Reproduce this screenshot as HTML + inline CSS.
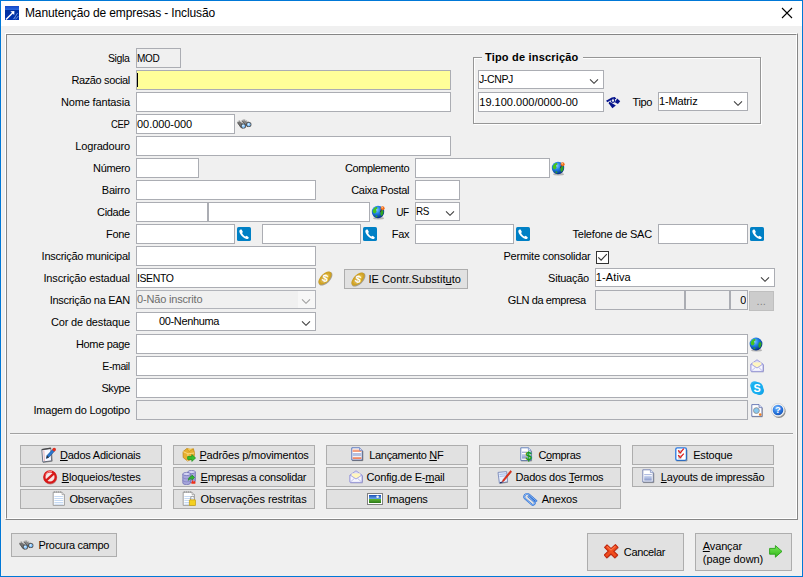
<!DOCTYPE html>
<html lang="pt-BR"><head><meta charset="utf-8"><title>Manutenção de empresas - Inclusão</title>
<style>
html,body{margin:0;padding:0;background:#f0f0f0;}
body{width:803px;height:577px;overflow:hidden;font-family:"Liberation Sans",sans-serif;font-size:11px;}
#win{position:relative;width:803px;height:577px;background:#f0f0f0;overflow:hidden;}
#win div,#win span,#win svg{position:absolute;box-sizing:border-box;}
.t{white-space:nowrap;line-height:13px;font-family:"Liberation Sans",sans-serif;}
.t u{position:static;text-decoration:underline;text-underline-offset:1px;}
.e{height:20px;border:1px solid #abadb3;background:#fff;}
.c{height:19px;border:1px solid #abadb3;background:#fff;}
.d{background:#f0f0f0;}
.b{height:20px;border:1px solid #adadad;background:#e1e1e1;}
.ar{width:10px;height:6px;}
</style></head><body>
<div id="win">
<div style="left:0;top:0;width:803px;height:577px;border:1px solid #0078d7;"></div>
<div style="left:1px;top:1px;width:801px;height:25px;background:#fff;"></div>
<div style="left:1px;top:26px;width:1px;height:550px;background:#f7f2ee;"></div>
<div style="left:801px;top:26px;width:1px;height:550px;background:#f7f2ee;"></div>
<svg style="left:781px;top:7px;width:12px;height:12px" viewBox="0 0 12 12"><path d="M1 1 L11 11 M11 1 L1 11" stroke="#000" stroke-width="1.1" fill="none"/></svg>
<div style="left:5px;top:33px;width:793px;height:487px;border-left:1px solid #fff;border-top:1px solid #fff;border-right:1px solid #868686;border-bottom:1px solid #868686;"></div>
<div style="left:6px;top:34px;width:791px;height:485px;border-left:1px solid #868686;border-top:1px solid #868686;border-right:1px solid #fff;border-bottom:1px solid #fff;"></div>
<div style="left:474px;top:58px;width:288px;height:67px;border:1px solid #fff;"></div>
<div style="left:473px;top:57px;width:288px;height:67px;border:1px solid #969696;"></div>
<div style="left:482px;top:52px;width:101px;height:12px;background:#f0f0f0;"></div>
<div style="left:10px;top:433px;width:783px;height:1px;background:#a2a2a2;"></div>
<div style="left:10px;top:434px;width:783px;height:1px;background:#f8f8f8;"></div>
<div class="e d" style="left:136px;top:48px;width:45px;"></div>
<div class="e" style="left:136px;top:70px;width:315px;background:#ffff99;"></div>
<div style="left:137px;top:73px;width:1px;height:14px;background:#000;"></div>
<div class="e" style="left:136px;top:92px;width:315px;"></div>
<div class="e" style="left:136px;top:114px;width:99px;"></div>
<div class="e" style="left:136px;top:136px;width:315px;"></div>
<div class="e" style="left:136px;top:158px;width:63px;"></div>
<div class="e" style="left:136px;top:180px;width:180px;"></div>
<div class="e" style="left:136px;top:202px;width:72px;"></div>
<div class="e" style="left:208px;top:202px;width:162px;"></div>
<div class="e" style="left:136px;top:224px;width:99px;"></div>
<div class="e" style="left:262px;top:224px;width:99px;"></div>
<div class="e" style="left:136px;top:246px;width:180px;"></div>
<div class="e" style="left:136px;top:268px;width:180px;"></div>
<div class="c" style="left:136px;top:290px;width:180px;background:#f0f0f0;border-color:#b2b4ba;"></div>
<div style="left:298px;top:291px;width:17px;height:17px;background:#f7f7f7;"></div>
<svg class="ar" style="left:301px;top:298px" viewBox="0 0 10 6"><path d="M1 1.3 L5 5.3 L9 1.3" fill="none" stroke="#a0a0a0" stroke-width="1.1"/></svg>
<div class="c" style="left:136px;top:312px;width:180px;"></div>
<svg class="ar" style="left:301px;top:320px" viewBox="0 0 10 6"><path d="M1 1.3 L5 5.3 L9 1.3" fill="none" stroke="#404040" stroke-width="1.1"/></svg>
<div class="e" style="left:136px;top:334px;width:612px;"></div>
<div class="e" style="left:136px;top:356px;width:612px;"></div>
<div class="e" style="left:136px;top:378px;width:612px;"></div>
<div class="e d" style="left:136px;top:400px;width:612px;"></div>
<div class="e" style="left:415px;top:158px;width:135px;"></div>
<div class="e" style="left:415px;top:180px;width:45px;"></div>
<div class="c" style="left:415px;top:202px;width:45px;"></div>
<svg class="ar" style="left:445px;top:210px" viewBox="0 0 10 6"><path d="M1 1.3 L5 5.3 L9 1.3" fill="none" stroke="#404040" stroke-width="1.1"/></svg>
<div class="e" style="left:415px;top:224px;width:99px;"></div>
<div class="e" style="left:658px;top:224px;width:90px;"></div>
<div class="c" style="left:595px;top:268px;width:180px;"></div>
<svg class="ar" style="left:760px;top:276px" viewBox="0 0 10 6"><path d="M1 1.3 L5 5.3 L9 1.3" fill="none" stroke="#404040" stroke-width="1.1"/></svg>
<div class="e d" style="left:595px;top:290px;width:90px;"></div>
<div class="e d" style="left:685px;top:290px;width:45px;"></div>
<div class="e d" style="left:730px;top:290px;width:18px;"></div>
<div style="left:749px;top:291px;width:25px;height:20px;background:#cccccc;border:1px solid #bfbfbf;"></div>
<div style="left:596px;top:251px;width:13px;height:13px;border:1px solid #333;background:#fff;"></div>
<svg style="left:596px;top:251px;width:13px;height:13px" viewBox="0 0 13 13"><path d="M2.3 6.3 L5.1 9.1 L10.8 3.2" fill="none" stroke="#333" stroke-width="1.1"/></svg>
<div class="c" style="left:478px;top:70px;width:126px;"></div>
<svg class="ar" style="left:589px;top:78px" viewBox="0 0 10 6"><path d="M1 1.3 L5 5.3 L9 1.3" fill="none" stroke="#404040" stroke-width="1.1"/></svg>
<div class="e" style="left:478px;top:92px;width:126px;"></div>
<div class="c" style="left:658px;top:92px;width:90px;"></div>
<svg class="ar" style="left:733px;top:100px" viewBox="0 0 10 6"><path d="M1 1.3 L5 5.3 L9 1.3" fill="none" stroke="#404040" stroke-width="1.1"/></svg>
<div class="b" style="left:344px;top:269px;width:124px;"></div>
<div class="b" style="left:20px;top:445px;width:142px;"></div>
<div class="b" style="left:20px;top:467px;width:142px;"></div>
<div class="b" style="left:20px;top:489px;width:142px;"></div>
<div class="b" style="left:173px;top:445px;width:142px;"></div>
<div class="b" style="left:173px;top:467px;width:142px;"></div>
<div class="b" style="left:173px;top:489px;width:142px;"></div>
<div class="b" style="left:326px;top:445px;width:142px;"></div>
<div class="b" style="left:326px;top:467px;width:142px;"></div>
<div class="b" style="left:326px;top:489px;width:142px;"></div>
<div class="b" style="left:479px;top:445px;width:142px;"></div>
<div class="b" style="left:479px;top:467px;width:142px;"></div>
<div class="b" style="left:479px;top:489px;width:142px;"></div>
<div class="b" style="left:632px;top:445px;width:142px;"></div>
<div class="b" style="left:632px;top:467px;width:142px;"></div>
<div class="b" style="left:11px;top:533px;width:106px;height:24px;"></div>
<div class="b" style="left:587px;top:533px;width:97px;height:38px;"></div>
<div class="b" style="left:695px;top:533px;width:97px;height:38px;"></div>
<svg style="width:0;height:0"><defs>
<radialGradient id="gGlobe" cx="38%" cy="32%" r="70%"><stop offset="0" stop-color="#8cc8ff"/><stop offset="0.45" stop-color="#1e80e8"/><stop offset="1" stop-color="#062e80"/></radialGradient>
<radialGradient id="gHelp" cx="40%" cy="30%" r="75%"><stop offset="0" stop-color="#7ab8ff"/><stop offset="0.6" stop-color="#2a78e0"/><stop offset="1" stop-color="#1550b0"/></radialGradient>
<linearGradient id="gTitle" x1="0" y1="0" x2="0" y2="1"><stop offset="0" stop-color="#1448c8"/><stop offset="0.3" stop-color="#2a6ae0"/><stop offset="0.32" stop-color="#0030a0"/><stop offset="1" stop-color="#0034b0"/></linearGradient>
<linearGradient id="gSky" x1="0" y1="0" x2="0" y2="1"><stop offset="0" stop-color="#1a50b8"/><stop offset="0.5" stop-color="#6aa8e8"/><stop offset="0.55" stop-color="#5ab030"/><stop offset="1" stop-color="#2a7818"/></linearGradient>
<linearGradient id="gDoc" x1="0" y1="0" x2="0" y2="1"><stop offset="0" stop-color="#c8d4f0"/><stop offset="1" stop-color="#8898c8"/></linearGradient>
<linearGradient id="gGreen" x1="0" y1="0" x2="0" y2="1"><stop offset="0" stop-color="#7ae858"/><stop offset="1" stop-color="#30b818"/></linearGradient>
</defs></svg>
<svg style="left:5px;top:6px;width:14px;height:14px" viewBox="0 0 14 14"><rect x="0" y="0" width="14" height="14" fill="url(#gTitle)"/><path d="M1 13.4 L8 6.4" stroke="#fff" stroke-width="1.4"/><path d="M5.4 5.2 L9.4 5 L9.2 9 Z" fill="#fff"/><path d="M9 12.6 L12.6 7 M10.4 13.4 L13.4 10 M8.4 13.2 L10 11.4" stroke="#9ab8f0" stroke-width="0.9" opacity="0.8"/></svg>
<svg style="left:237px;top:118.5px;width:15px;height:10px" viewBox="0 0 15 10"><path d="M0.2 3.2 L2.2 1.3 L8.9 5.6 L8.6 8.6 L5.2 9.6 L3.4 8.6 Z" fill="#747474"/><path d="M4.6 1.2 L7.2 0.2 L14.3 4 L14.2 7 L11 8.2 L8.8 6.6 Z" fill="#868686"/><path d="M1.2 2.7 L2.3 1.8 L7.4 5 M5.4 1.3 L7.2 0.7 L12.6 3.7" stroke="#cfcfcf" stroke-width="1" fill="none"/><path d="M0.5 3.7 L3.8 8.2 M4.9 1.8 L9.2 6.4" stroke="#444" stroke-width="0.7" fill="none"/><circle cx="6.3" cy="7" r="2.6" fill="#505050"/><circle cx="6.4" cy="7.1" r="1.8" fill="#86c6ff"/><circle cx="6" cy="6.6" r="0.8" fill="#e4f4ff"/><circle cx="11.7" cy="5.5" r="2.6" fill="#505050"/><circle cx="11.8" cy="5.6" r="1.8" fill="#86c6ff"/><circle cx="11.4" cy="5.1" r="0.8" fill="#e4f4ff"/></svg>
<svg style="left:606px;top:97px;width:15px;height:12px" viewBox="0 0 15 12"><path d="M0 3.8 L5.8 0.4 L8.8 0 L10.4 1.8 L8.8 2.3 L7.2 1.6 L1.4 5.2 Z" fill="#06148c"/><circle cx="6.9" cy="3.6" r="1.8" fill="none" stroke="#06148c" stroke-width="1.1"/><path d="M11.2 1.6 L14.2 4.2 L11.9 7 L8.8 5.2 Z" fill="#06148c"/><path d="M3.2 4.4 L9.8 8.6 L6.4 11.2 L2.8 6.4 Z" fill="#06148c"/></svg>
<svg style="left:550.1px;top:159.8px;width:16px;height:16px" viewBox="0 0 16 16"><ellipse cx="8.6" cy="14.2" rx="5.5" ry="1.2" fill="#000" opacity="0.25"/><circle cx="8" cy="8" r="6.2" fill="url(#gGlobe)"/><path d="M3.2 5.5 Q4.5 3 7 2.8 L7.6 4.2 L6 5.4 L6.6 7.8 L5 9.6 L3.4 9 L2.6 7 Z" fill="#44c41c"/><path d="M10.8 6.6 L12.8 6 L13.6 8 L12.6 11 L11 12 L10.4 9.6 Z" fill="#30a820"/><path d="M5.4 11.6 L7 11.4 L7.4 13 L6 13.2 Z" fill="#30a820"/><circle cx="12.6" cy="4.2" r="2" fill="#f06a18"/><circle cx="12.2" cy="3.7" r="0.8" fill="#ffc890"/><path d="M11.4 5.6 L10.2 8.4" stroke="#403020" stroke-width="0.9"/></svg>
<svg style="left:370.3px;top:203.8px;width:16px;height:16px" viewBox="0 0 16 16"><ellipse cx="8.6" cy="14.2" rx="5.5" ry="1.2" fill="#000" opacity="0.25"/><circle cx="8" cy="8" r="6.2" fill="url(#gGlobe)"/><path d="M3.2 5.5 Q4.5 3 7 2.8 L7.6 4.2 L6 5.4 L6.6 7.8 L5 9.6 L3.4 9 L2.6 7 Z" fill="#44c41c"/><path d="M10.8 6.6 L12.8 6 L13.6 8 L12.6 11 L11 12 L10.4 9.6 Z" fill="#30a820"/><path d="M5.4 11.6 L7 11.4 L7.4 13 L6 13.2 Z" fill="#30a820"/><circle cx="12.6" cy="4.2" r="2" fill="#f06a18"/><circle cx="12.2" cy="3.7" r="0.8" fill="#ffc890"/><path d="M11.4 5.6 L10.2 8.4" stroke="#403020" stroke-width="0.9"/></svg>
<svg style="left:748.4px;top:335.5px;width:16px;height:16px" viewBox="0 0 16 16"><ellipse cx="8.6" cy="14.2" rx="5.5" ry="1.2" fill="#000" opacity="0.25"/><circle cx="8" cy="8" r="6.4" fill="url(#gGlobe)"/><path d="M3.2 5.5 Q4.5 3 7 2.8 L7.6 4.2 L6 5.4 L6.6 7.8 L5 9.6 L3.4 9 L2.6 7 Z" fill="#44c41c"/><path d="M10.8 6.6 L12.8 6 L13.6 8 L12.6 11 L11 12 L10.4 9.6 Z" fill="#30a820"/><path d="M5.4 11.6 L7 11.4 L7.4 13 L6 13.2 Z" fill="#30a820"/></svg>
<svg style="left:237px;top:227px;width:14px;height:14px" viewBox="0 0 14 14"><rect x="0" y="0" width="14" height="14" rx="1.6" fill="#0080c5"/><path d="M3.6 2.6 C2.2 3.2 1.9 4.6 3 6.6 C4.6 9.4 7 11.4 9.6 11.9 C11 12.1 11.9 11.2 11.8 10.4 L9.8 8.8 L8.4 9.6 C7 9 5.6 7.4 5.1 6 L5.9 4.9 L4.6 2.5 Z" fill="#fff"/></svg>
<svg style="left:363px;top:227px;width:14px;height:14px" viewBox="0 0 14 14"><rect x="0" y="0" width="14" height="14" rx="1.6" fill="#0080c5"/><path d="M3.6 2.6 C2.2 3.2 1.9 4.6 3 6.6 C4.6 9.4 7 11.4 9.6 11.9 C11 12.1 11.9 11.2 11.8 10.4 L9.8 8.8 L8.4 9.6 C7 9 5.6 7.4 5.1 6 L5.9 4.9 L4.6 2.5 Z" fill="#fff"/></svg>
<svg style="left:516px;top:227px;width:14px;height:14px" viewBox="0 0 14 14"><rect x="0" y="0" width="14" height="14" rx="1.6" fill="#0080c5"/><path d="M3.6 2.6 C2.2 3.2 1.9 4.6 3 6.6 C4.6 9.4 7 11.4 9.6 11.9 C11 12.1 11.9 11.2 11.8 10.4 L9.8 8.8 L8.4 9.6 C7 9 5.6 7.4 5.1 6 L5.9 4.9 L4.6 2.5 Z" fill="#fff"/></svg>
<svg style="left:750px;top:227px;width:14px;height:14px" viewBox="0 0 14 14"><rect x="0" y="0" width="14" height="14" rx="1.6" fill="#0080c5"/><path d="M3.6 2.6 C2.2 3.2 1.9 4.6 3 6.6 C4.6 9.4 7 11.4 9.6 11.9 C11 12.1 11.9 11.2 11.8 10.4 L9.8 8.8 L8.4 9.6 C7 9 5.6 7.4 5.1 6 L5.9 4.9 L4.6 2.5 Z" fill="#fff"/></svg>
<svg style="left:317.5px;top:270.5px;width:15px;height:15px" viewBox="0 0 15 15"><ellipse cx="7.5" cy="7.7" rx="8.6" ry="4.6" transform="rotate(-45 7.5 7.7)" fill="#8c8470" opacity="0.75"/><ellipse cx="7" cy="7.1" rx="8.2" ry="4.3" transform="rotate(-45 7 7.1)" fill="#cfa224"/><ellipse cx="7" cy="7.1" rx="6" ry="2.7" transform="rotate(-45 7 7.1)" fill="#dcb440"/><text x="7.2" y="10.8" font-family="Liberation Sans, sans-serif" font-size="10.5" font-weight="bold" fill="#fff" text-anchor="middle" transform="rotate(14 7 7)">$</text></svg>
<svg style="left:350.5px;top:271.5px;width:15px;height:15px" viewBox="0 0 15 15"><ellipse cx="7.5" cy="7.7" rx="8.6" ry="4.6" transform="rotate(-45 7.5 7.7)" fill="#8c8470" opacity="0.75"/><ellipse cx="7" cy="7.1" rx="8.2" ry="4.3" transform="rotate(-45 7 7.1)" fill="#cfa224"/><ellipse cx="7" cy="7.1" rx="6" ry="2.7" transform="rotate(-45 7 7.1)" fill="#dcb440"/><text x="7.2" y="10.8" font-family="Liberation Sans, sans-serif" font-size="10.5" font-weight="bold" fill="#fff" text-anchor="middle" transform="rotate(14 7 7)">$</text></svg>
<svg style="left:750px;top:359px;width:14px;height:14px" viewBox="0 0 14 14"><path d="M1 5 L7 0.8 L13 5 L13 12 L1 12 Z" fill="#dcdcf8" stroke="#9090d8" stroke-width="0.8"/><rect x="2.8" y="3.4" width="8.4" height="4.6" fill="#fff6c0"/><path d="M1 5 L7 9 L13 5 L13 12.4 L1 12.4 Z" fill="#f6f6ff" stroke="#9898dc" stroke-width="0.8"/><path d="M1.2 12.2 L5.6 8.2 M12.8 12.2 L8.4 8.2" stroke="#a8a8e0" stroke-width="0.7"/><path d="M1.4 13 L13.6 13 L13.6 6" stroke="#6060a0" stroke-width="0.7" fill="none" opacity="0.5"/></svg>
<svg style="left:749.8px;top:380.6px;width:15px;height:15px" viewBox="0 0 15 15"><circle cx="4.6" cy="4.6" r="4.4" fill="#2ab8f4"/><circle cx="9.6" cy="9.6" r="4.4" fill="#14a4e8"/><circle cx="7.1" cy="7.1" r="6.1" fill="#18aef0"/><text x="7.1" y="11" font-family="Liberation Sans, sans-serif" font-size="10.8" font-weight="bold" fill="#fff" text-anchor="middle">S</text></svg>
<svg style="left:750.6px;top:403.6px;width:12px;height:14px" viewBox="0 0 12 14"><path d="M0.8 0.6 L8 0.6 L11 3.6 L11 12.4 L0.8 12.4 Z" fill="#fff" stroke="#6070b0" stroke-width="0.9"/><path d="M8 0.6 L8 3.6 L11 3.6" fill="#d0d8f0" stroke="#6070b0" stroke-width="0.7"/><path d="M1 12.8 L11.4 12.8 L11.4 4" stroke="#707070" stroke-width="0.8" fill="none" opacity="0.6"/><circle cx="5.4" cy="6.6" r="2.9" fill="#88c8f0" stroke="#909090" stroke-width="0.9"/><circle cx="9.2" cy="10.6" r="1.3" fill="#f08020"/></svg>
<svg style="left:771px;top:403px;width:16px;height:16px" viewBox="0 0 16 16"><circle cx="7.9" cy="8.2" r="6.7" fill="#4a4a4a" opacity="0.6"/><circle cx="7" cy="7" r="6.7" fill="#f4f4f4" stroke="#c0c0c0" stroke-width="0.5"/><circle cx="7" cy="7" r="5.3" fill="url(#gHelp)"/><text x="7" y="10.4" font-family="Liberation Sans, sans-serif" font-size="9.5" font-weight="bold" fill="#fff" text-anchor="middle">?</text></svg>
<svg style="left:18.5px;top:539.5px;width:15px;height:10px" viewBox="0 0 15 10"><path d="M0.2 3.2 L2.2 1.3 L8.9 5.6 L8.6 8.6 L5.2 9.6 L3.4 8.6 Z" fill="#747474"/><path d="M4.6 1.2 L7.2 0.2 L14.3 4 L14.2 7 L11 8.2 L8.8 6.6 Z" fill="#868686"/><path d="M1.2 2.7 L2.3 1.8 L7.4 5 M5.4 1.3 L7.2 0.7 L12.6 3.7" stroke="#cfcfcf" stroke-width="1" fill="none"/><path d="M0.5 3.7 L3.8 8.2 M4.9 1.8 L9.2 6.4" stroke="#444" stroke-width="0.7" fill="none"/><circle cx="6.3" cy="7" r="2.6" fill="#505050"/><circle cx="6.4" cy="7.1" r="1.8" fill="#86c6ff"/><circle cx="6" cy="6.6" r="0.8" fill="#e4f4ff"/><circle cx="11.7" cy="5.5" r="2.6" fill="#505050"/><circle cx="11.8" cy="5.6" r="1.8" fill="#86c6ff"/><circle cx="11.4" cy="5.1" r="0.8" fill="#e4f4ff"/></svg>
<svg style="left:603.6px;top:543.6px;width:16px;height:16px" viewBox="0 0 16 16"><path d="M3 0.8 L7 4.6 L11.4 0.6 L14 3.4 L9.8 7.3 L13.6 11 L10.8 13.8 L6.9 10 L2.8 13.8 L0.3 11 L4.3 7.2 L0.6 3.4 Z" transform="translate(0.7 0.8)" fill="#505050" opacity="0.35"/><path d="M3 0.8 L7 4.6 L11.4 0.6 L14 3.4 L9.8 7.3 L13.6 11 L10.8 13.8 L6.9 10 L2.8 13.8 L0.3 11 L4.3 7.2 L0.6 3.4 Z" fill="#f04c1e" stroke="#c02810" stroke-width="1.1" stroke-linejoin="round"/><path d="M3 2.4 L7 6 L11.4 2.2" stroke="#ff7c4c" stroke-width="1.1" fill="none" opacity="0.9"/></svg>
<svg style="left:768.8px;top:544.6px;width:14px;height:13px" viewBox="0 0 14 13"><path d="M0.6 3.4 L6.4 3.4 L6.4 0.6 L13 6.4 L6.4 12.2 L6.4 9.2 L0.6 9.2 Z" fill="url(#gGreen)" stroke="#28a018" stroke-width="0.9" stroke-linejoin="round"/></svg>
<svg style="left:40.7px;top:447px;width:16px;height:16px" viewBox="0 0 16 16"><path d="M0.8 2.6 L9.8 1.2 L10.6 13.8 L1.8 15 Z" fill="#f8f8ff" stroke="#70788c" stroke-width="1"/><path d="M0.8 2.6 L9.8 1.2" stroke="#484848" stroke-width="1.4"/><path d="M2.8 3.4 L3.4 14" stroke="#e09090" stroke-width="0.7"/><path d="M2 15.4 L11.2 14.2 L10.6 4" stroke="#505050" stroke-width="0.9" fill="none" opacity="0.6"/><path d="M5.4 11.4 L6 8.6 L11.6 2.6 L13.4 4.2 L8 10.2 Z" fill="#2a78d0" stroke="#184890" stroke-width="0.6"/><path d="M5.4 11.4 L6 8.6 L8 10.2 Z" fill="#303030"/><circle cx="13.2" cy="2.6" r="1.8" fill="#e03020"/></svg>
<svg style="left:42.5px;top:470px;width:15px;height:15px" viewBox="0 0 15 15"><circle cx="7.4" cy="7.6" r="6.8" fill="#801010" opacity="0.4"/><circle cx="7" cy="7" r="5.7" fill="#f6e4e4" stroke="#d81818" stroke-width="2.3"/><path d="M3 10.6 L11 3.4" stroke="#d81818" stroke-width="2.3"/><path d="M2.6 4.6 A5.6 5.6 0 0 1 9 1.6" stroke="#ff8080" stroke-width="1" fill="none"/></svg>
<svg style="left:51.5px;top:490.2px;width:14px;height:16px" viewBox="0 0 14 16"><path d="M1.2 2.2 L10 2.2 L12.4 4.6 L12.4 15.4 L1.2 15.4 Z" fill="#fff" stroke="#8c8c8c" stroke-width="0.8"/><path d="M10 2.2 L10 4.6 L12.4 4.6" fill="#e8e8e8" stroke="#8c8c8c" stroke-width="0.6"/><path d="M2.4 1 L2.4 3 M4.4 1 L4.4 3 M6.4 1 L6.4 3 M8.4 1 L8.4 3" stroke="#9a9a9a" stroke-width="0.8"/><path d="M2.4 6.5 H11.2 M2.4 8.5 H11.2 M2.4 10.5 H11.2 M2.4 12.5 H11.2 M2.4 14.2 H11.2" stroke="#b8d0f0" stroke-width="0.8"/></svg>
<svg style="left:181.5px;top:447px;width:15px;height:16px" viewBox="0 0 15 16"><path d="M1 4.6 L5 1.4 L8.4 2.6 L11.4 1.8 L12.6 6 L11.8 11.4 L5.6 14 L1.2 10.6 Z" fill="#e8b030" stroke="#b88010" stroke-width="0.7"/><path d="M1 4.6 L6 6.8 L12.6 6 M6 6.8 L5.6 14" stroke="#fce090" stroke-width="0.8" fill="none"/><path d="M5 1.4 L7 4.6 L11.4 1.8" stroke="#c89018" stroke-width="0.7" fill="#f4c850"/><path d="M5.6 9.6 L9.8 9.6 L9.8 7.6 L13.6 11 L9.8 14.4 L9.8 12.4 L5.6 12.4 Z" fill="#38c030" stroke="#189018" stroke-width="0.7"/></svg>
<svg style="left:181.5px;top:470px;width:15px;height:15px" viewBox="0 0 15 15"><path d="M5.8 2 V11 A3.8 1.6 0 0 0 13.399999999999999 11 V2 Z" fill="#a8a8dc" stroke="#6868b0" stroke-width="0.7"/><ellipse cx="9.6" cy="2" rx="3.8" ry="1.6" fill="#d4d4f4" stroke="#6868b0" stroke-width="0.7"/><path d="M5.8 5.24 A3.8 1.6 0 0 0 13.399999999999999 5.24 M5.8 8.3 A3.8 1.6 0 0 0 13.399999999999999 8.3" fill="none" stroke="#7878c0" stroke-width="0.6"/><path d="M0.7999999999999998 4 V13 A3.8 1.6 0 0 0 8.399999999999999 13 V4 Z" fill="#a8a8dc" stroke="#6868b0" stroke-width="0.7"/><ellipse cx="4.6" cy="4" rx="3.8" ry="1.6" fill="#d4d4f4" stroke="#6868b0" stroke-width="0.7"/><path d="M0.7999999999999998 7.24 A3.8 1.6 0 0 0 8.399999999999999 7.24 M0.7999999999999998 10.3 A3.8 1.6 0 0 0 8.399999999999999 10.3" fill="none" stroke="#7878c0" stroke-width="0.6"/><path d="M6.4 10.4 C6.2 7.6 7.8 6.4 9.8 6.4 L9.8 4.8 L12.6 7.6 L9.8 10 L9.8 8.6 C8.4 8.6 7.4 9 6.4 10.4 Z" fill="#30b830" stroke="#188018" stroke-width="0.6"/><path d="M9.4 13.8 C9 11.6 10.4 11.4 10.6 9.8 C11.6 10.8 11.4 11.8 12 12 C12.4 11.4 12.4 10.8 12.2 10.2 C13.6 11.4 13.8 12.8 13.2 13.8 Z" fill="#f03018"/></svg>
<svg style="left:181.5px;top:490.2px;width:14px;height:16px" viewBox="0 0 14 16"><path d="M1.2 2.2 L10 2.2 L12.4 4.6 L12.4 15.4 L1.2 15.4 Z" fill="#fff" stroke="#8c8c8c" stroke-width="0.8"/><path d="M10 2.2 L10 4.6 L12.4 4.6" fill="#e8e8e8" stroke="#8c8c8c" stroke-width="0.6"/><path d="M2.4 1 L2.4 3 M4.4 1 L4.4 3 M6.4 1 L6.4 3 M8.4 1 L8.4 3" stroke="#9a9a9a" stroke-width="0.8"/><path d="M2.4 6.5 H11.2 M2.4 8.5 H11.2 M2.4 10.5 H11.2 M2.4 12.5 H11.2 M2.4 14.2 H11.2" stroke="#b8d0f0" stroke-width="0.8"/><path d="M8.6 10 V8.2 A1.9 1.9 0 0 1 12.4 8.2 V10" fill="none" stroke="#a0a0a0" stroke-width="1.1"/><rect x="7.4" y="9.8" width="6.2" height="5.8" rx="0.6" fill="#f4d020" stroke="#c09810" stroke-width="0.7"/></svg>
<svg style="left:350.5px;top:447px;width:13px;height:15px" viewBox="0 0 13 15"><path d="M0.8 0.8 L8.6 0.8 L11.2 3.4 L11.2 13 L0.8 13 Z" fill="#fff" stroke="#4868b8" stroke-width="0.9"/><path d="M1.2 13.6 L11.8 13.6 L11.8 4" stroke="#404040" stroke-width="0.9" fill="none" opacity="0.65"/><rect x="1.6" y="2.6" width="8.8" height="2.4" fill="#f4a080"/><rect x="1.6" y="6" width="8.8" height="3.2" fill="#b4c0e0"/><rect x="1.6" y="10.2" width="8.8" height="1.9" fill="#ee8866"/><path d="M8.6 0.8 L8.6 3.4 L11.2 3.4" fill="#e0e8f8" stroke="#4868b8" stroke-width="0.6"/></svg>
<svg style="left:349.0px;top:470px;width:14px;height:14px" viewBox="0 0 14 14"><path d="M1 5 L7 0.8 L13 5 L13 12 L1 12 Z" fill="#dcdcf8" stroke="#9090d8" stroke-width="0.8"/><rect x="2.8" y="3.4" width="8.4" height="4.6" fill="#fff6c0"/><path d="M1 5 L7 9 L13 5 L13 12.4 L1 12.4 Z" fill="#f6f6ff" stroke="#9898dc" stroke-width="0.8"/><path d="M1.2 12.2 L5.6 8.2 M12.8 12.2 L8.4 8.2" stroke="#a8a8e0" stroke-width="0.7"/><path d="M1.4 13 L13.6 13 L13.6 6" stroke="#6060a0" stroke-width="0.7" fill="none" opacity="0.5"/></svg>
<svg style="left:366.5px;top:493px;width:16px;height:12px" viewBox="0 0 16 12"><rect x="0.5" y="0.5" width="15" height="11" fill="#fff" stroke="#808080" stroke-width="1"/><rect x="2" y="2" width="12" height="8" fill="url(#gSky)"/><circle cx="10.6" cy="3.8" r="1.3" fill="#fff" opacity="0.9"/></svg>
<svg style="left:519.5px;top:447px;width:13px;height:16px" viewBox="0 0 13 16"><path d="M0.8 0.8 L8.4 0.8 L11 3.4 L11 13.4 L0.8 13.4 Z" fill="#fff" stroke="#5878b8" stroke-width="0.9"/><path d="M1.2 14 L11.6 14 L11.6 4" stroke="#404040" stroke-width="0.8" fill="none" opacity="0.5"/><path d="M8.4 0.8 L8.4 3.4 L11 3.4" fill="#e0e8f8" stroke="#5878b8" stroke-width="0.6"/><rect x="2" y="4.6" width="6" height="1.4" fill="#a8b4d8"/><rect x="2" y="7" width="6" height="4.6" fill="url(#gDoc)"/><text x="8.8" y="13.4" font-family="Liberation Sans, sans-serif" font-size="11.5" font-weight="bold" fill="#18981c" text-anchor="middle">$</text><path d="M8.8 4 V14.8" stroke="#18981c" stroke-width="1"/></svg>
<svg style="left:496.5px;top:470px;width:15px;height:14px" viewBox="0 0 15 14"><path d="M1 2.4 L9.6 1.6 L10.6 11.8 L2.4 13.2 Z" fill="#e8f0ff" stroke="#7888b8" stroke-width="0.9"/><path d="M2.4 4.4 L9 3.8 M2.6 6.4 L9.2 5.8" stroke="#98b0e0" stroke-width="0.9"/><path d="M2.6 13.6 L11 12.2" stroke="#606060" stroke-width="0.8" opacity="0.6"/><path d="M13.6 0.6 L14.6 1.8 L7 11 L5.4 12 L5.8 10 Z" fill="#e83018" stroke="#b01808" stroke-width="0.5"/><path d="M5.4 12 L3 12.8" stroke="#202060" stroke-width="1.2"/></svg>
<svg style="overflow:visible;left:522.1px;top:490.7px;width:16px;height:16px" viewBox="0 0 16 16"><g transform="rotate(41 8 8)"><path d="M14.2 5.3 H4.3 A2.85 2.85 0 0 0 4.3 11 H12.8 A1.9 1.9 0 0 0 12.8 7.2 H5.2" fill="none" stroke="#2f6fd0" stroke-width="1.8" stroke-linecap="round"/><path d="M14.2 5.3 H4.3 A2.85 2.85 0 0 0 4.3 11 H12.8 A1.9 1.9 0 0 0 12.8 7.2 H5.2" fill="none" stroke="#9cc8ff" stroke-width="0.7" stroke-linecap="round"/></g></svg>
<svg style="left:674.5px;top:447px;width:13px;height:15px" viewBox="0 0 13 15"><rect x="0.8" y="0.8" width="10.6" height="12.6" rx="1.4" fill="#fff" stroke="#2a78e0" stroke-width="1.3"/><path d="M1.4 14 L12 14 L12 3" stroke="#404040" stroke-width="0.8" fill="none" opacity="0.5"/><rect x="3.4" y="3.2" width="3" height="3" fill="#e8e8e8" stroke="#b0b0b0" stroke-width="0.5"/><rect x="3.4" y="8.2" width="3" height="3" fill="#e8e8e8" stroke="#b0b0b0" stroke-width="0.5"/><path d="M3.2 3.4 L5.2 5.8 L8.8 1.6 M3.2 8.2 L5.2 10.6 L8.8 6.6" stroke="#e01818" stroke-width="1.3" fill="none"/></svg>
<svg style="left:641.5px;top:469px;width:13px;height:15px" viewBox="0 0 13 15"><path d="M0.8 0.8 L8.4 0.8 L11.2 3.6 L11.2 13 L0.8 13 Z" fill="#fff" stroke="#7080b0" stroke-width="0.9"/><path d="M1.2 13.6 L11.8 13.6 L11.8 4.2" stroke="#505050" stroke-width="0.8" fill="none" opacity="0.6"/><path d="M8.4 0.8 L8.4 3.6 L11.2 3.6" fill="#d8e0f4" stroke="#7080b0" stroke-width="0.6"/><rect x="2.2" y="5" width="7.6" height="1.2" fill="#b0bce0"/><rect x="2.2" y="7" width="7.6" height="4.6" fill="url(#gDoc)"/></svg>
<span class="t" id="t0" style="font-size:11px;color:#000;top:52px;right:673.1px;transform:scaleX(0.957);transform-origin:right center;letter-spacing:-0.400px;">Sigla</span>
<span class="t" id="t1" style="font-size:11px;color:#000;top:74px;right:673.1px;letter-spacing:-0.374px;">Razão social</span>
<span class="t" id="t2" style="font-size:11px;color:#000;top:96px;right:673.1px;letter-spacing:-0.149px;">Nome fantasia</span>
<span class="t" id="t3" style="font-size:11px;color:#000;top:118px;right:673.1px;transform:scaleX(0.863);transform-origin:right center;letter-spacing:-0.400px;">CEP</span>
<span class="t" id="t4" style="font-size:11px;color:#000;top:140px;right:673.1px;letter-spacing:-0.168px;">Logradouro</span>
<span class="t" id="t5" style="font-size:11px;color:#000;top:162px;right:673.1px;letter-spacing:-0.388px;">Número</span>
<span class="t" id="t6" style="font-size:11px;color:#000;top:184px;right:673.1px;letter-spacing:-0.207px;">Bairro</span>
<span class="t" id="t7" style="font-size:11px;color:#000;top:206px;right:673.1px;letter-spacing:-0.343px;">Cidade</span>
<span class="t" id="t8" style="font-size:11px;color:#000;top:228px;right:673.1px;letter-spacing:-0.320px;">Fone</span>
<span class="t" id="t9" style="font-size:11px;color:#000;top:250px;right:673.1px;letter-spacing:-0.276px;">Inscrição municipal</span>
<span class="t" id="t10" style="font-size:11px;color:#000;top:272px;right:673.1px;letter-spacing:-0.121px;">Inscrição estadual</span>
<span class="t" id="t11" style="font-size:11px;color:#000;top:294px;right:673.1px;letter-spacing:-0.305px;">Inscrição na EAN</span>
<span class="t" id="t12" style="font-size:11px;color:#000;top:316px;right:673.1px;letter-spacing:-0.156px;">Cor de destaque</span>
<span class="t" id="t13" style="font-size:11px;color:#000;top:338px;right:673.1px;letter-spacing:-0.319px;">Home page</span>
<span class="t" id="t14" style="font-size:11px;color:#000;top:360px;right:673.1px;transform:scaleX(0.956);transform-origin:right center;letter-spacing:-0.400px;">E-mail</span>
<span class="t" id="t15" style="font-size:11px;color:#000;top:382px;right:673.1px;letter-spacing:-0.416px;">Skype</span>
<span class="t" id="t16" style="font-size:11px;color:#000;top:404px;right:673.1px;letter-spacing:-0.216px;">Imagem do Logotipo</span>
<span class="t" id="t17" style="font-size:11px;color:#000;top:162px;right:393.8px;letter-spacing:-0.389px;">Complemento</span>
<span class="t" id="t18" style="font-size:11px;color:#000;top:184px;right:393.8px;letter-spacing:-0.314px;">Caixa Postal</span>
<span class="t" id="t19" style="font-size:11px;color:#000;top:206px;right:393.8px;transform:scaleX(0.916);transform-origin:right center;letter-spacing:-0.400px;">UF</span>
<span class="t" id="t20" style="font-size:11px;color:#000;top:228px;right:393.8px;letter-spacing:-0.281px;">Fax</span>
<span class="t" id="t21" style="font-size:11px;color:#000;top:228px;right:151.0px;letter-spacing:-0.198px;">Telefone de SAC</span>
<span class="t" id="t22" style="font-size:11px;color:#000;top:250px;right:212.5px;letter-spacing:-0.227px;">Permite consolidar</span>
<span class="t" id="t23" style="font-size:11px;color:#000;top:272px;right:214.1px;letter-spacing:-0.252px;">Situação</span>
<span class="t" id="t24" style="font-size:11px;color:#000;top:294px;right:217.4px;letter-spacing:-0.426px;">GLN da empresa</span>
<span class="t" id="t25" style="font-size:11px;color:#000;top:96px;left:632.5px;letter-spacing:-0.375px;">Tipo</span>
<span class="t" id="t26" style="font-size:11px;color:#000;top:52px;left:137px;transform:scaleX(0.911);transform-origin:left center;letter-spacing:-0.400px;">MOD</span>
<span class="t" id="t27" style="font-size:11px;color:#000;top:118px;left:137px;letter-spacing:-0.047px;">00.000-000</span>
<span class="t" id="t28" style="font-size:11px;color:#000;top:272px;left:137px;transform:scaleX(0.951);transform-origin:left center;letter-spacing:-0.400px;">ISENTO</span>
<span class="t" id="t29" style="font-size:11px;color:#000;top:73px;left:479px;transform:scaleX(0.955);transform-origin:left center;letter-spacing:-0.400px;">J-CNPJ</span>
<span class="t" id="t30" style="font-size:11px;color:#000;top:96px;left:479.3px;letter-spacing:0.006px;">19.100.000/0000-00</span>
<span class="t" id="t31" style="font-size:11px;color:#000;top:95px;left:659px;letter-spacing:-0.154px;">1-Matriz</span>
<span class="t" id="t32" style="font-size:11px;color:#000;top:205px;left:415.8px;transform:scaleX(0.898);transform-origin:left center;letter-spacing:-0.400px;">RS</span>
<span class="t" id="t33" style="font-size:11px;color:#000;top:271px;left:595.8px;letter-spacing:0.107px;">1-Ativa</span>
<span class="t" id="t34" style="font-size:11px;color:#6d6d6d;top:293px;left:137px;letter-spacing:-0.176px;">0-Não inscrito</span>
<span class="t" id="t35" style="font-size:11px;color:#000;top:315px;left:159px;letter-spacing:-0.359px;">00-Nenhuma</span>
<span class="t" id="t36" style="font-size:11px;color:#000;top:294px;right:57.5px;transform:scaleX(0.978);transform-origin:right center;letter-spacing:-0.400px;">0</span>
<span class="t" id="t37" style="font-size:11px;color:#838383;top:295px;left:711.2px;width:100px;text-align:center;">...</span>
<span class="t" id="t38" style="font-size:12px;color:#000;top:7px;left:25px;letter-spacing:-0.125px;">Manutenção de empresas - Inclusão</span>
<span class="t" id="t39" style="font-size:11px;color:#000;font-weight:bold;top:51px;left:485px;letter-spacing:0.189px;">Tipo de inscrição</span>
<span class="t" id="t40" style="font-size:11px;color:#000;top:273px;left:368.4px;letter-spacing:0.045px;">IE Contr.Substit<u>u</u>to</span>
<span class="t" id="t41" style="font-size:11px;color:#000;top:539px;left:38.5px;letter-spacing:-0.315px;">Procura campo</span>
<span class="t" id="t42" style="font-size:11px;color:#000;top:546px;left:623.8px;letter-spacing:-0.354px;">Cancelar</span>
<span class="t" id="t43" style="font-size:11px;color:#000;top:540px;left:702.8px;letter-spacing:-0.139px;"><u>A</u>vançar</span>
<span class="t" id="t44" style="font-size:11px;color:#000;top:553px;left:702.8px;letter-spacing:-0.069px;">(page down)</span>
<span class="t" id="t45" style="font-size:11px;color:#000;top:449px;left:60px;letter-spacing:-0.238px;"><u>D</u>ados Adicionais</span>
<span class="t" id="t46" style="font-size:11px;color:#000;top:471px;left:61.7px;letter-spacing:-0.115px;"><u>B</u>loqueios/testes</span>
<span class="t" id="t47" style="font-size:11px;color:#000;top:493px;left:69.5px;letter-spacing:-0.183px;">Observações</span>
<span class="t" id="t48" style="font-size:11px;color:#000;top:449px;left:199.4px;letter-spacing:-0.161px;"><u>P</u>adrões p/movimentos</span>
<span class="t" id="t49" style="font-size:11px;color:#000;top:471px;left:200.6px;letter-spacing:-0.300px;"><u>E</u>mpresas a consolidar</span>
<span class="t" id="t50" style="font-size:11px;color:#000;top:493px;left:200.6px;letter-spacing:-0.047px;">Observações restritas</span>
<span class="t" id="t51" style="font-size:11px;color:#000;top:449px;left:369.3px;letter-spacing:-0.331px;">Lançamento <u>N</u>F</span>
<span class="t" id="t52" style="font-size:11px;color:#000;top:471px;left:366.6px;letter-spacing:-0.209px;">Config.de E-<u>m</u>ail</span>
<span class="t" id="t53" style="font-size:11px;color:#000;top:493px;left:386.7px;letter-spacing:-0.172px;">Imagens</span>
<span class="t" id="t54" style="font-size:11px;color:#000;top:449px;left:538.5px;letter-spacing:-0.377px;">C<u>o</u>mpras</span>
<span class="t" id="t55" style="font-size:11px;color:#000;top:471px;left:515.6px;letter-spacing:-0.238px;">Dados dos <u>T</u>ermos</span>
<span class="t" id="t56" style="font-size:11px;color:#000;top:493px;left:541.7px;letter-spacing:-0.184px;">Anexos</span>
<span class="t" id="t57" style="font-size:11px;color:#000;top:449px;left:693.2px;letter-spacing:-0.154px;">Estoque</span>
<span class="t" id="t58" style="font-size:11px;color:#000;top:471px;left:660.8px;letter-spacing:-0.201px;"><u>L</u>ayouts de impressão</span>
</div></body></html>
